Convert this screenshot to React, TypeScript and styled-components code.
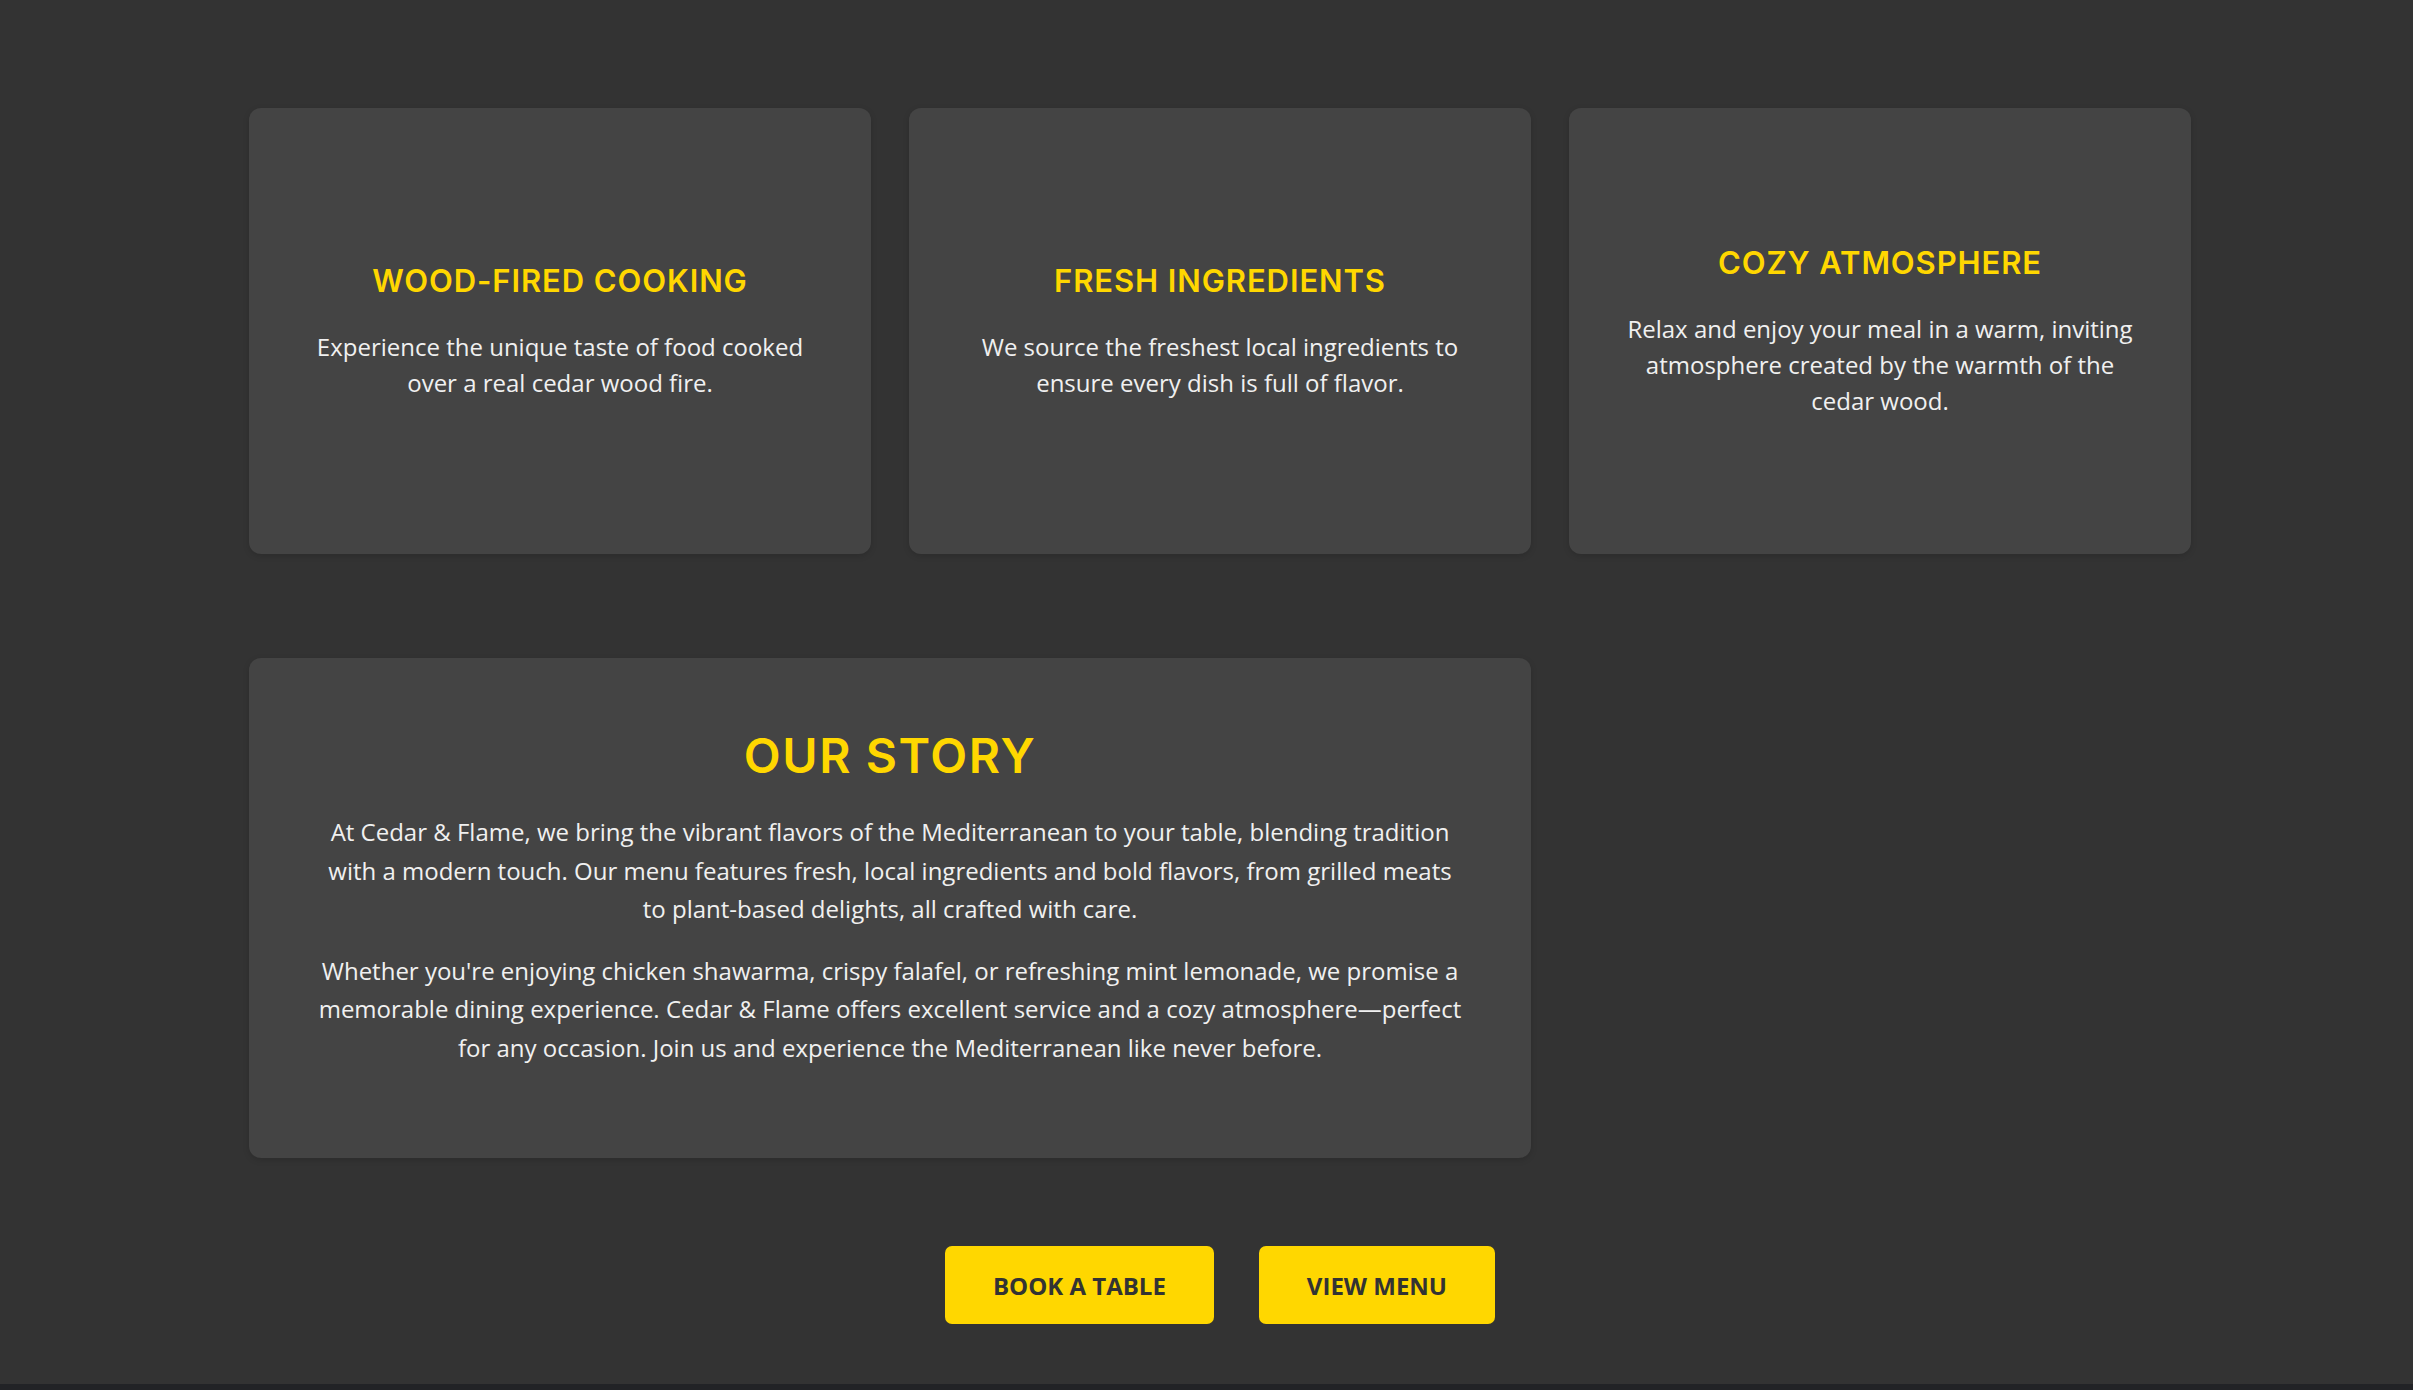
import React from "react";
import styled, { createGlobalStyle } from "styled-components";

const GlobalStyle = createGlobalStyle`
  html, body {
    margin: 0;
    padding: 0;
    background: #333333;
  }
  body {
    font-family: "Open Sans", "Liberation Sans", sans-serif;
    color: #f2f2f2;
  }
  * { box-sizing: border-box; }
`;

const Page = styled.main`
  background: #333333;
  padding: 108px 222px 60px 249px;
`;

const Grid = styled.section`
  display: grid;
  grid-template-columns: repeat(3, 1fr);
  column-gap: 38px;
  row-gap: 104px;
  width: 1942px;
`;

const Card = styled.article<{ $span?: number }>`
  grid-column: span ${(p) => p.$span ?? 1};
  background: #444444;
  border-radius: 12px;
  box-shadow: 0 2px 6px rgba(0, 0, 0, 0.15);
  min-height: 446px;
  padding: 0 48px;
  display: flex;
  flex-direction: column;
  justify-content: center;
  align-items: center;
  text-align: center;
`;

const CardTitle = styled.h3`
  margin: 0 0 29px;
  font-family: "Inter", "Noto Sans", sans-serif;
  font-weight: 600;
  font-size: 31px;
  line-height: 38px;
  letter-spacing: 0.9px;
  color: #ffd700;
  text-transform: uppercase;
`;

const CardText = styled.p`
  margin: 0;
  font-size: 24px;
  line-height: 36px;
  color: #f0f0f0;
`;

const StoryCard = styled(Card)`
  min-height: 0;
  display: block;
  padding: 69px 67px 91px;
`;

const StoryTitle = styled.h2`
  margin: 0 0 28px;
  font-family: "Inter", "Noto Sans", sans-serif;
  font-weight: 600;
  font-size: 48px;
  line-height: 58px;
  letter-spacing: 1.6px;
  color: #ffd700;
  text-transform: uppercase;
`;

const StoryText = styled.p`
  margin: 0 0 23px;
  font-size: 24px;
  line-height: 38.5px;
  color: #f0f0f0;
  &:last-child { margin-bottom: 0; }
`;

const Actions = styled.div`
  display: flex;
  justify-content: center;
  gap: 45px;
  width: 1942px;
  margin-top: 88px;
`;

const Button = styled.a`
  display: inline-flex;
  align-items: center;
  justify-content: center;
  height: 78px;
  padding: 0 48px;
  background: #ffd700;
  color: #333333;
  border-radius: 7px;
  font-family: "Open Sans", sans-serif;
  font-weight: 700;
  font-size: 24px;
  text-transform: uppercase;
  text-decoration: none;
  cursor: pointer;
`;

const Footer = styled.footer`
  background: #222326;
  height: 80px;
`;

const features = [
  {
    title: "Wood-Fired Cooking",
    text: "Experience the unique taste of food cooked over a real cedar wood fire.",
  },
  {
    title: "Fresh Ingredients",
    text: "We source the freshest local ingredients to ensure every dish is full of flavor.",
  },
  {
    title: "Cozy Atmosphere",
    text: "Relax and enjoy your meal in a warm, inviting atmosphere created by the warmth of the cedar wood.",
  },
];

export default function App() {
  return (
    <>
      <GlobalStyle />
      <Page>
        <Grid>
          {features.map((f) => (
            <Card key={f.title}>
              <CardTitle>{f.title}</CardTitle>
              <CardText>{f.text}</CardText>
            </Card>
          ))}
          <StoryCard $span={2}>
            <StoryTitle>Our Story</StoryTitle>
            <StoryText>
              At Cedar &amp; Flame, we bring the vibrant flavors of the Mediterranean to your table,
              blending tradition with a modern touch. Our menu features fresh, local ingredients and
              bold flavors, from grilled meats to plant-based delights, all crafted with care.
            </StoryText>
            <StoryText>
              Whether you're enjoying chicken shawarma, crispy falafel, or refreshing mint lemonade,
              we promise a memorable dining experience. Cedar &amp; Flame offers excellent service and
              a cozy atmosphere—perfect for any occasion. Join us and experience the Mediterranean
              like never before.
            </StoryText>
          </StoryCard>
        </Grid>
        <Actions>
          <Button>Book a Table</Button>
          <Button>View Menu</Button>
        </Actions>
      </Page>
      <Footer />
    </>
  );
}
